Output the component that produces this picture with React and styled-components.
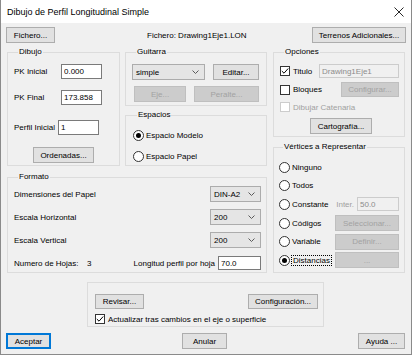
import React from "react";
import styled, { createGlobalStyle, css } from "styled-components";

const GlobalStyle = createGlobalStyle`
  html, body {
    margin: 0;
    padding: 0;
    background: #ffffff;
  }
  body {
    font-family: "Liberation Sans", Arial, sans-serif;
  }
`;

const Window = styled.div`
  width: 412px;
  height: 355px;
  box-sizing: border-box;
  border: 1px solid #8a8a8a;
  border-top: none;
  background: #f0f0f0;
  display: flex;
  flex-direction: column;
  font-family: "Liberation Sans", Arial, sans-serif;
  font-size: 8px;
  color: #000;
`;

const TitleBar = styled.div`
  height: 23px;
  flex-shrink: 0;
  background: #ffffff;
  display: flex;
  align-items: center;
  justify-content: space-between;
  padding: 0 7px 0 6px;
  font-size: 9px;
  color: #000;
`;

const Body = styled.div`
  padding: 4px 5px 0 5px;
  display: flex;
  flex-direction: column;
`;

const Row = styled.div`
  display: flex;
  align-items: center;
  height: ${(p) => p.$h || 16}px;
  margin-top: ${(p) => p.$mt || 0}px;
  margin-left: ${(p) => p.$ml || 0}px;
  gap: ${(p) => p.$gap || 0}px;
  flex-shrink: 0;
`;

const FileName = styled.span`
  margin-left: 92px;
`;

const Main = styled.div`
  display: grid;
  grid-template-columns: 260px 132px;
  column-gap: 6px;
  margin: 4px 0 0 1px;
`;

const Column = styled.div`
  display: flex;
  flex-direction: column;
  gap: ${(p) => p.$gap}px;
`;

const Split = styled.div`
  display: flex;
  gap: 5px;
`;

const Group = styled.fieldset`
  box-sizing: border-box;
  margin: 0;
  min-width: 0;
  width: ${(p) => (p.$w ? `${p.$w}px` : "auto")};
  height: ${(p) => p.$h}px;
  border: 1px solid #dcdcdc;
  padding: ${(p) => p.$pad};
  display: flex;
  flex-direction: column;
`;

const Legend = styled.legend`
  font-size: 8px;
  line-height: 10px;
  padding: 0 1px;
  margin-left: 4px;
`;

const Label = styled.span`
  width: ${(p) => (p.$w ? `${p.$w}px` : "auto")};
  flex-shrink: 0;
  color: ${(p) => (p.$dim ? "#a0a0a0" : "#000")};
  margin-left: ${(p) => p.$ml || 0}px;
  margin-right: ${(p) => p.$mr || 0}px;
  white-space: nowrap;
`;

const Button = styled.button`
  box-sizing: border-box;
  width: ${(p) => p.$w}px;
  height: ${(p) => p.$h || 16}px;
  margin: 0 0 0 ${(p) => p.$ml || 0}px;
  padding: 0;
  font-family: inherit;
  font-size: 8px;
  color: #000;
  background: #e1e1e1;
  border: 1px solid #adadad;
  border-radius: 0;
  flex-shrink: 0;
  &:disabled {
    background: #cccccc;
    border-color: #bfbfbf;
    color: #a2a2a2;
  }
  ${(p) =>
    p.$default &&
    css`
      border-color: #0078d7;
      box-shadow: inset 0 0 0 1px #0078d7;
    `}
`;

const TextBox = styled.input`
  box-sizing: border-box;
  width: ${(p) => p.$w}px;
  height: ${(p) => p.$h || 15}px;
  margin: 0 0 0 ${(p) => p.$ml || 0}px;
  padding: 0 2px;
  font-family: inherit;
  font-size: 8px;
  color: #000;
  background: #ffffff;
  border: 1px solid #7a7a7a;
  border-radius: 0;
  outline: none;
  flex-shrink: 0;
  &:disabled {
    background: #f0f0f0;
    border-color: #cccccc;
    color: #8c8c8c;
  }
`;

const Combo = styled.div`
  box-sizing: border-box;
  width: ${(p) => p.$w}px;
  height: 16px;
  margin-left: ${(p) => p.$ml || 0}px;
  display: flex;
  align-items: center;
  justify-content: space-between;
  padding: 0 5px 0 3px;
  background: #e5e5e5;
  border: 1px solid #acacac;
  flex-shrink: 0;
`;

const Right = styled.div`
  margin-left: auto;
  display: flex;
  align-items: center;
  gap: ${(p) => p.$gap || 0}px;
`;

const Box = styled.span`
  box-sizing: border-box;
  width: 10px;
  height: 10px;
  flex-shrink: 0;
  display: inline-flex;
  align-items: center;
  justify-content: center;
  background: #ffffff;
  border: 1px solid ${(p) => (p.$off ? "#cccccc" : "#333333")};
`;

const Round = styled.span`
  box-sizing: border-box;
  width: 11px;
  height: 11px;
  flex-shrink: 0;
  border-radius: 50%;
  border: 1px solid #333333;
  background: #ffffff;
  display: inline-flex;
  align-items: center;
  justify-content: center;
  &::after {
    content: "";
    width: 5px;
    height: 5px;
    border-radius: 50%;
    background: #000;
    display: ${(p) => (p.$on ? "block" : "none")};
  }
`;

const Choice = styled.label`
  display: flex;
  align-items: center;
  gap: ${(p) => p.$gap || 3}px;
  color: ${(p) => (p.$off ? "#a0a0a0" : "#000")};
  white-space: nowrap;
`;

const Focus = styled.span`
  outline: 1px dotted #000;
  outline-offset: 0;
  padding: 0 1px;
`;

const Bottom = styled.div`
  display: flex;
  justify-content: space-between;
  margin-top: 6px;
  padding-right: 1px;
`;

const Chevron = () => (
  <svg width="7" height="4" viewBox="0 0 7 4">
    <polyline points="0.5,0.5 3.5,3.5 6.5,0.5" fill="none" stroke="#5a5a5a" strokeWidth="1" />
  </svg>
);

const Check = ({ checked, off }) => (
  <Box $off={off}>
    {checked && (
      <svg width="8" height="8" viewBox="0 0 8 8">
        <polyline points="0.8,4 3,6.2 7.2,1.5" fill="none" stroke="#000" strokeWidth="1" />
      </svg>
    )}
  </Box>
);

const Close = () => (
  <svg width="10" height="10" viewBox="0 0 10 10">
    <path d="M0.5 0.5 L9.5 9.5 M9.5 0.5 L0.5 9.5" stroke="#111" strokeWidth="0.9" />
  </svg>
);

const vertices = [
  { name: "Ninguno" },
  { name: "Todos" },
  { name: "Constante", extra: "inter" },
  { name: "Códigos", button: "Seleccionar..." },
  { name: "Variable", button: "Definir..." },
  { name: "Distancias", button: "...", on: true },
];

export default function App() {
  return (
    <>
      <GlobalStyle />
      <Window>
        <TitleBar>
          <span>Dibujo de Perfil Longitudinal Simple</span>
          <Close />
        </TitleBar>
        <Body>
          <Row>
            <Button $w={49}>Fichero...</Button>
            <FileName>Fichero: Drawing1Eje1.LON</FileName>
            <Right>
              <Button $w={94}>Terrenos Adicionales...</Button>
            </Right>
          </Row>

          <Main>
            <Column $gap={6}>
              <Split>
                <Group $w={113} $h={119} $pad="7px 6px 0 6px">
                  <Legend>Dibujo</Legend>
                  <Row $h={15}>
                    <Label $w={47}>PK Inicial</Label>
                    <TextBox $w={41} value="0.000" readOnly />
                  </Row>
                  <Row $h={15} $mt={11}>
                    <Label $w={47}>PK Final</Label>
                    <TextBox $w={41} value="173.858" readOnly />
                  </Row>
                  <Row $h={15} $mt={15}>
                    <Label $w={44}>Perfil Inicial</Label>
                    <TextBox $w={41} value="1" readOnly />
                  </Row>
                  <Row $mt={12} $ml={19}>
                    <Button $w={61}>Ordenadas...</Button>
                  </Row>
                </Group>
                <Column $gap={4}>
                  <Group $w={142} $h={59} $pad="7px 6px 0 6px">
                    <Legend>Guitarra</Legend>
                    <Row>
                      <Combo $w={73}>
                        <span>simple</span>
                        <Chevron />
                      </Combo>
                      <Button $w={46} $ml={8}>
                        Editar...
                      </Button>
                    </Row>
                    <Row $mt={6} $ml={2}>
                      <Button $w={52} disabled>
                        Eje...
                      </Button>
                      <Button $w={65} $ml={8} disabled>
                        Peralte...
                      </Button>
                    </Row>
                  </Group>
                  <Group $w={142} $h={56} $pad="8px 7px 0 7px">
                    <Legend>Espacios</Legend>
                    <Row $h={14}>
                      <Choice $gap={2}>
                        <Round $on />
                        Espacio Modelo
                      </Choice>
                    </Row>
                    <Row $h={14} $mt={7}>
                      <Choice $gap={2}>
                        <Round />
                        Espacio Papel
                      </Choice>
                    </Row>
                  </Group>
                </Column>
              </Split>

              <Group $h={101} $pad="4px 5px 0 6px">
                <Legend>Formato</Legend>
                <Row>
                  <Label>Dimensiones del Papel</Label>
                  <Right>
                    <Combo $w={51}>
                      <span>DIN-A2</span>
                      <Chevron />
                    </Combo>
                  </Right>
                </Row>
                <Row $mt={7}>
                  <Label>Escala Horizontal</Label>
                  <Right>
                    <Combo $w={51}>
                      <span>200</span>
                      <Chevron />
                    </Combo>
                  </Right>
                </Row>
                <Row $mt={7}>
                  <Label>Escala Vertical</Label>
                  <Right>
                    <Combo $w={51}>
                      <span>200</span>
                      <Chevron />
                    </Combo>
                  </Right>
                </Row>
                <Row $mt={7}>
                  <Label $w={73}>Numero de Hojas:</Label>
                  <Label>3</Label>
                  <Right $gap={3}>
                    <Label>Longitud perfil por hoja</Label>
                    <TextBox $w={43} $h={14} value="70.0" readOnly />
                  </Right>
                </Row>
              </Group>
            </Column>

            <Column $gap={5}>
              <Group $h={90} $pad="7px 5px 0 6px">
                <Legend>Opciones</Legend>
                <Row $h={14}>
                  <Choice>
                    <Check checked />
                    Titulo
                  </Choice>
                  <Right>
                    <TextBox $w={80} $h={14} value="Drawing1Eje1" disabled readOnly />
                  </Right>
                </Row>
                <Row $h={15} $mt={4}>
                  <Choice>
                    <Check />
                    Bloques
                  </Choice>
                  <Right>
                    <Button $w={58} $h={15} disabled>
                      Configurar...
                    </Button>
                  </Right>
                </Row>
                <Row $h={12} $mt={4}>
                  <Choice $off>
                    <Check off />
                    Dibujar Catenaria
                  </Choice>
                </Row>
                <Row $mt={5} $ml={30}>
                  <Button $w={62}>Cartografía...</Button>
                </Row>
              </Group>

              <Group $h={131} $pad="7px 5px 0 5px">
                <Legend>Vértices a Representar</Legend>
                <Column $gap={2.7}>
                  {vertices.map((v) => (
                    <Row key={v.name}>
                      <Choice $gap={2}>
                        <Round $on={v.on} />
                        {v.on ? <Focus>{v.name}</Focus> : v.name}
                      </Choice>
                      {v.extra && (
                        <Right $gap={3}>
                          <Label $dim>Inter.</Label>
                          <TextBox $w={42} $h={14} value="50.0" disabled readOnly />
                        </Right>
                      )}
                      {v.button && (
                        <Right>
                          <Button $w={64} disabled>
                            {v.button}
                          </Button>
                        </Right>
                      )}
                    </Row>
                  ))}
                </Column>
              </Group>
            </Column>
          </Main>

          <Row $h={45} $mt={9} $ml={81}>
            <Group $w={237} $h={45} $pad="11px 5px 0 7px">
              <Row $h={15}>
                <Button $w={49} $h={15}>
                  Revisar...
                </Button>
                <Right>
                  <Button $w={70} $h={15}>
                    Configuración...
                  </Button>
                </Right>
              </Row>
              <Row $h={12} $mt={4}>
                <Choice>
                  <Check checked />
                  Actualizar tras cambios en el eje o superficie
                </Choice>
              </Row>
            </Group>
          </Row>

          <Bottom>
            <Button $w={45} $default>
              Aceptar
            </Button>
            <Button $w={45}>Anular</Button>
            <Button $w={47}>Ayuda ...</Button>
          </Bottom>
        </Body>
      </Window>
    </>
  );
}
